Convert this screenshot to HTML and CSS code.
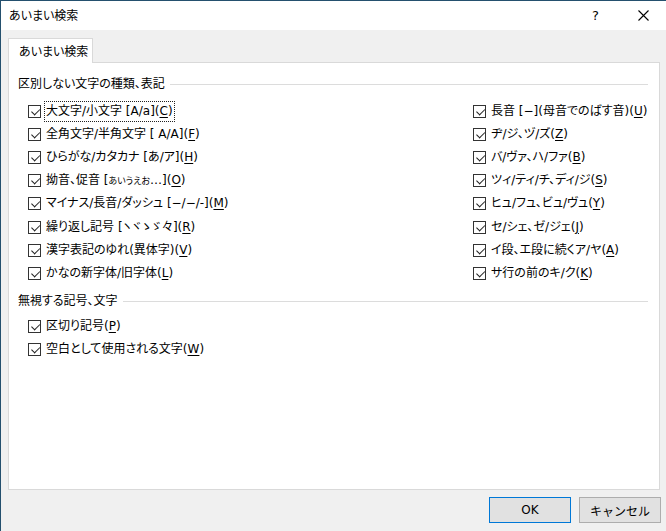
FILE: index.html
```html
<!DOCTYPE html>
<html lang="ja">
<head>
<meta charset="utf-8">
<title>あいまい検索</title>
<link rel="stylesheet" href="styles.css">
</head>
<body>
<div class="window">
  <div class="titlebar">
    <span class="title">あいまい検索</span>
    <span class="help">?</span>
    <span class="close"><svg width="11" height="11" viewBox="0 0 11 11"><path d="M0.5 0.5 L10.5 10.5 M10.5 0.5 L0.5 10.5" stroke="#000" stroke-width="1.1" fill="none"/></svg></span>
  </div>
  <div class="client">
    <div class="tabs"><div class="tab">あいまい検索</div></div>
    <div class="panel">
      <div class="group-head"><span>区別しない文字の種類、表記</span><i class="rule"></i></div>
      <div class="items g1">
        <div class="row"><span class="cb"></span><span class="lbl focus">大文字/小文字 [A/a](<u>C</u>)</span></div>
        <div class="row"><span class="cb"></span><span class="lbl">長音 [−](母音でのばす音)(<u>U</u>)</span></div>
        <div class="row"><span class="cb"></span><span class="lbl">全角文字/半角文字 [ A/A](<u>F</u>)</span></div>
        <div class="row"><span class="cb"></span><span class="lbl">ヂ/ジ、ヅ/ズ(<u>Z</u>)</span></div>
        <div class="row"><span class="cb"></span><span class="lbl">ひらがな/カタカナ [あ/ア](<u>H</u>)</span></div>
        <div class="row"><span class="cb"></span><span class="lbl">バ/ヴァ、ハ/ファ(<u>B</u>)</span></div>
        <div class="row"><span class="cb"></span><span class="lbl">拗音、促音 [<span class="small">あいうえお</span>…](<u>O</u>)</span></div>
        <div class="row"><span class="cb"></span><span class="lbl">ツィ/ティ/チ、ディ/ジ(<u>S</u>)</span></div>
        <div class="row"><span class="cb"></span><span class="lbl">マイナス/長音/ダッシュ [−/−/-](<u>M</u>)</span></div>
        <div class="row"><span class="cb"></span><span class="lbl">ヒュ/フュ、ビュ/ヴュ(<u>Y</u>)</span></div>
        <div class="row"><span class="cb"></span><span class="lbl">繰り返し記号 [ヽヾゝゞ々](<u>R</u>)</span></div>
        <div class="row"><span class="cb"></span><span class="lbl">セ/シェ、ゼ/ジェ(<u>J</u>)</span></div>
        <div class="row"><span class="cb"></span><span class="lbl">漢字表記のゆれ(異体字)(<u>V</u>)</span></div>
        <div class="row"><span class="cb"></span><span class="lbl">イ段、エ段に続くア/ヤ(<u>A</u>)</span></div>
        <div class="row"><span class="cb"></span><span class="lbl">かなの新字体/旧字体(<u>L</u>)</span></div>
        <div class="row"><span class="cb"></span><span class="lbl">サ行の前のキ/ク(<u>K</u>)</span></div>
      </div>
      <div class="group-head g2h"><span>無視する記号、文字</span><i class="rule"></i></div>
      <div class="items g2">
        <div class="row"><span class="cb"></span><span class="lbl">区切り記号(<u>P</u>)</span></div>
        <div class="row"><span class="cb"></span><span class="lbl">空白として使用される文字(<u>W</u>)</span></div>
      </div>
    </div>
    <div class="footer">
      <button class="btn default">OK</button>
      <button class="btn">キャンセル</button>
    </div>
  </div>
</div>
</body>
</html>
```

FILE: styles.css
```css
html, body {
  margin: 0;
  padding: 0;
}
body {
  width: 666px;
  height: 531px;
  overflow: hidden;
  font-family: "DejaVu Sans", "Noto Sans CJK JP", sans-serif;
  font-size: 12px;
  font-feature-settings: "palt";
  color: #000;
}
.window {
  box-sizing: border-box;
  width: 666px;
  height: 531px;
  border-top: 1px solid #24506e;
  border-left: 1px solid #24506e;
  display: flex;
  flex-direction: column;
  background: #f0f0f0;
}
.titlebar {
  height: 29px;
  background: #fff;
  display: flex;
  align-items: center;
  padding-left: 8px;
}
.title {
  flex: 1;
  line-height: 16px;
}
.help {
  width: 12px;
  margin-right: 34px;
  font-size: 13px;
  line-height: 16px;
}
.close {
  display: flex;
  margin-right: 17px;
}
.client {
  flex: 1;
  padding: 8px 6px 0 7px;
  display: flex;
  flex-direction: column;
}
.tabs {
  height: 24px;
  display: flex;
  align-items: flex-end;
}
.tab {
  box-sizing: border-box;
  height: 25px;
  width: 85px;
  margin-bottom: -1px;
  background: #fff;
  border: 1px solid #d9d9d9;
  border-bottom: none;
  padding-left: 10px;
  line-height: 26px;
  position: relative;
  z-index: 1;
}
.panel {
  box-sizing: border-box;
  height: 428px;
  background: #fff;
  border: 1px solid #d9d9d9;
  padding: 13px 11px 0 9px;
}
.group-head {
  display: flex;
  align-items: center;
  height: 16px;
  line-height: 16px;
}
.rule {
  flex: 1;
  height: 1px;
  background: #dcdcdc;
  margin-left: 5px;
}
.g2h {
  margin-top: 8px;
}
.items {
  display: grid;
  grid-template-columns: 445px 1fr;
  grid-auto-rows: 23.2px;
  margin-left: 10px;
}
.g1 {
  margin-top: 7.5px;
}
.g2 {
  margin-top: 5.5px;
  grid-template-columns: 1fr;
}
.row {
  display: flex;
  align-items: center;
}
.cb {
  box-sizing: border-box;
  width: 13px;
  height: 13px;
  border: 1px solid #333;
  background: #fff;
  position: relative;
  flex: none;
}
.cb::after {
  content: "";
  position: absolute;
  left: 1.5px;
  top: 0px;
  width: 7px;
  height: 3.5px;
  border-left: 1px solid #222;
  border-bottom: 1px solid #222;
  transform: translate(0.5px, 2.5px) rotate(-45deg);
  transform-origin: center;
}
.lbl {
  margin-left: 3px;
  padding: 1px 1px 2px;
  border: 1px dotted transparent;
  line-height: 16px;
  white-space: nowrap;
}
.lbl.focus {
  border-color: #222;
}
.lbl u {
  text-underline-offset: 2px;
}
.small {
  font-size: 9px;
}
.footer {
  display: flex;
  justify-content: flex-end;
  gap: 8px;
  margin-top: 7px;
  margin-right: -1px;
}
.btn {
  box-sizing: border-box;
  width: 82px;
  height: 26px;
  font-family: inherit;
  font-size: 12px;
  color: #000;
  background: #e1e1e1;
  border: 1px solid #adadad;
  padding: 0;
  margin: 0;
}
.btn.default {
  border-color: #0078d7;
}
```
